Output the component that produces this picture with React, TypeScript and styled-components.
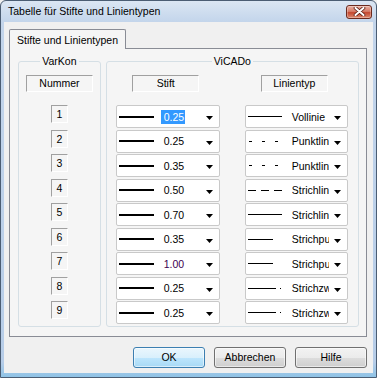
import { Fragment } from "react";
import styled, { createGlobalStyle } from "styled-components";

const GlobalStyle = createGlobalStyle`
  html, body {
    margin: 0;
    padding: 0;
    background: #f0f0f0;
  }
  body {
    font-family: "Liberation Sans", Arial, sans-serif;
    font-size: 10.5px;
    line-height: 13px;
    color: #000;
  }
`;

type Pattern = "solid" | "dot" | "dash" | "short" | "dashdot";

type Pen = {
  value: string;
  type: string;
  pattern: Pattern;
  color?: string;
};

const pens: Pen[] = [
  { value: "0.25", type: "Vollinie", pattern: "solid" },
  { value: "0.25", type: "Punktlinie", pattern: "dot" },
  { value: "0.35", type: "Punktlinie", pattern: "dot" },
  { value: "0.50", type: "Strichlinie", pattern: "dash" },
  { value: "0.70", type: "Strichlinie", pattern: "solid" },
  { value: "0.35", type: "Strichpunkt", pattern: "short" },
  { value: "1.00", type: "Strichpunkt", pattern: "short", color: "#3c0050" },
  { value: "0.25", type: "Strichzweipunkt", pattern: "dashdot" },
  { value: "0.25", type: "Strichzweipunkt", pattern: "dashdot" },
];

const Window = styled.div`
  width: 377px;
  height: 378px;
  box-sizing: border-box;
  border: 1px solid #4b5d73;
  border-radius: 6px 6px 0 0;
  background: linear-gradient(180deg, #dbe6f3 0px, #c3d5eb 21px, #b7cde8 96%, #8fc3e6 100%);
  padding: 0 3px 4px 3px;
  display: flex;
  flex-direction: column;
`;

const TitleBar = styled.div`
  height: 21px;
  display: flex;
  align-items: center;
  justify-content: space-between;
  padding: 0 1px 0 4px;
`;

const Title = styled.span`
  font-size: 10.5px;
  color: #000;
`;

const CloseButton = styled.div`
  width: 26px;
  height: 14px;
  box-sizing: border-box;
  border: 1px solid #6b2a1e;
  border-radius: 3px;
  background: linear-gradient(180deg, #eab0a2 0%, #d67c68 45%, #c4472f 55%, #dc8a70 100%);
  box-shadow: inset 0 0 0 1px rgba(255, 255, 255, 0.3);
  display: flex;
  align-items: center;
  justify-content: center;
`;

const Client = styled.div`
  flex: 1;
  background: #f0f0f0;
  padding: 7px 6px 0 5px;
  display: flex;
  flex-direction: column;
`;

const TabStrip = styled.div`
  display: flex;
  height: 20px;
  margin-bottom: -1px;
  position: relative;
  z-index: 1;
`;

const Tab = styled.div`
  width: 117px;
  box-sizing: border-box;
  border: 1px solid #898c95;
  border-bottom: none;
  border-radius: 2px 2px 0 0;
  background: #f5f5f5;
  padding: 4px 0 0 7px;
  white-space: nowrap;
`;

const Panel = styled.div`
  height: 289px;
  box-sizing: border-box;
  border: 1px solid #898c95;
  background: #f5f5f5;
  padding: 6px 7px 9px 8px;
  display: flex;
  gap: 5px;
`;

const Group = styled.fieldset<{ $width: number }>`
  margin: 0;
  min-width: 0;
  width: ${(p) => p.$width}px;
  box-sizing: border-box;
  border: 1px solid #d5dfe5;
  border-radius: 3px;
  padding: 7px 0 0 0;
  display: flex;
  flex-direction: column;
`;

const Legend = styled.legend`
  margin: 0 auto;
  padding: 0 2px;
  line-height: 13px;
`;

const Sunken = styled.div`
  box-sizing: border-box;
  border-top: 1px solid #a0a0a0;
  border-left: 1px solid #a0a0a0;
  border-right: 1px solid #ffffff;
  border-bottom: 1px solid #ffffff;
  display: flex;
  align-items: center;
  justify-content: center;
`;

const Header = styled(Sunken)`
  width: 67px;
  height: 17px;
  padding-bottom: 1px;
`;

const NumberBox = styled(Sunken)`
  width: 17px;
  height: 18px;
  padding-top: 1px;
`;

const HeaderRow = styled.div<{ $cols: string; $indent?: number }>`
  display: grid;
  grid-template-columns: ${(p) => p.$cols};
  column-gap: 25px;
  justify-items: center;
  padding-left: ${(p) => p.$indent || 0}px;
`;

const Rows = styled.div<{ $cols: string; $indent?: number }>`
  margin-top: 13px;
  display: grid;
  grid-template-columns: ${(p) => p.$cols};
  grid-auto-rows: 23px;
  column-gap: 25px;
  row-gap: 1.5px;
  justify-items: center;
  align-items: start;
  padding-left: ${(p) => p.$indent || 0}px;
`;

const Combo = styled.div`
  width: 100%;
  height: 23px;
  box-sizing: border-box;
  border: 1px solid #c9c9c9;
  border-radius: 2px;
  background: #ffffff;
  display: flex;
  align-items: center;
  padding-left: 2px;
`;

const PenSample = styled.div`
  width: 35px;
  height: 2px;
  background: #000;
  flex: none;
`;

const ComboText = styled.span`
  flex: 1;
  min-width: 0;
  overflow: hidden;
  white-space: nowrap;
  margin-left: 7px;
  padding: 0 1px 0 3px;
  display: flex;
`;

const TextValue = styled.span<{ $selected?: boolean; $color?: string }>`
  background: ${(p) => (p.$selected ? "#3399ff" : "transparent")};
  color: ${(p) => (p.$selected ? "#fff" : p.$color || "#000")};
  margin-left: -3px;
  padding: 0 1px 0 3px;
  line-height: 14px;
`;

const ArrowArea = styled.div`
  width: 18px;
  flex: none;
  display: flex;
  justify-content: center;
  padding-top: 3px;
`;

const ButtonRow = styled.div`
  display: flex;
  justify-content: flex-end;
  gap: 9px;
  margin-top: 10px;
`;

const Button = styled.div<{ $default?: boolean }>`
  width: 72px;
  height: 21px;
  box-sizing: border-box;
  border: 1px solid ${(p) => (p.$default ? "#3c7fb1" : "#707070")};
  border-radius: 3px;
  background: ${(p) =>
    p.$default
      ? "linear-gradient(180deg, #eaf6fd 0%, #d9f0fc 50%, #bee6fd 50%, #a7d9f5 100%)"
      : "linear-gradient(180deg, #f2f2f2 0%, #ebebeb 50%, #dddddd 50%, #cfcfcf 100%)"};
  box-shadow: inset 0 0 0 1px rgba(255, 255, 255, 0.55);
  display: flex;
  align-items: center;
  justify-content: center;
`;

const Arrow = () => (
  <svg width="7" height="4" viewBox="0 0 7 4">
    <polygon points="0,0 7,0 3.5,4" fill="#000" />
  </svg>
);

const LineSample = ({ pattern }: { pattern: Pattern }) => (
  <svg width="35" height="3" viewBox="0 0 35 3" style={{ flex: "none" }}>
    {pattern === "solid" && <line x1="0" y1="1.5" x2="34" y2="1.5" stroke="#000" strokeWidth="1" />}
    {pattern === "dot" && (
      <line x1="1" y1="1.5" x2="31" y2="1.5" stroke="#000" strokeWidth="1" strokeDasharray="3 10" />
    )}
    {pattern === "dash" && (
      <line x1="0" y1="1.5" x2="34" y2="1.5" stroke="#000" strokeWidth="1" strokeDasharray="8 5" />
    )}
    {pattern === "short" && <line x1="0" y1="1.5" x2="25" y2="1.5" stroke="#000" strokeWidth="1" />}
    {pattern === "dashdot" && (
      <>
        <line x1="0" y1="1.5" x2="28" y2="1.5" stroke="#000" strokeWidth="1" />
        <line x1="32" y1="1.5" x2="33" y2="1.5" stroke="#000" strokeWidth="1" />
      </>
    )}
  </svg>
);

const App = () => {
  return (
    <>
      <GlobalStyle />
      <Window>
        <TitleBar>
          <Title>Tabelle für Stifte und Linientypen</Title>
          <CloseButton>
            <svg width="13" height="9" viewBox="0 0 13 9">
              <path d="M2.5 1 L10.5 8 M10.5 1 L2.5 8" stroke="#5a1c12" strokeWidth="3.6" strokeLinecap="round" />
              <path d="M2.5 1 L10.5 8 M10.5 1 L2.5 8" stroke="#ffffff" strokeWidth="2" strokeLinecap="round" />
            </svg>
          </CloseButton>
        </TitleBar>
        <Client>
          <TabStrip>
            <Tab>Stifte und Linientypen</Tab>
          </TabStrip>
          <Panel>
            <Group $width={83}>
              <Legend>VarKon</Legend>
              <HeaderRow $cols="81px">
                <Header>Nummer</Header>
              </HeaderRow>
              <Rows $cols="81px">
                {pens.map((_, i) => (
                  <NumberBox key={i}>{i + 1}</NumberBox>
                ))}
              </Rows>
            </Group>
            <Group $width={254}>
              <Legend>ViCADo</Legend>
              <HeaderRow $cols="104px 103px" $indent={7}>
                <Header>Stift</Header>
                <Header>Linientyp</Header>
              </HeaderRow>
              <Rows $cols="104px 103px" $indent={9}>
                {pens.map((pen, i) => (
                  <Fragment key={i}>
                    <Combo>
                      <PenSample />
                      <ComboText>
                        <TextValue $selected={i === 0} $color={pen.color}>
                          {pen.value}
                        </TextValue>
                      </ComboText>
                      <ArrowArea>
                        <Arrow />
                      </ArrowArea>
                    </Combo>
                    <Combo>
                      <LineSample pattern={pen.pattern} />
                      <ComboText style={{ marginLeft: 6 }}>
                        <TextValue>{pen.type}</TextValue>
                      </ComboText>
                      <ArrowArea>
                        <Arrow />
                      </ArrowArea>
                    </Combo>
                  </Fragment>
                ))}
              </Rows>
            </Group>
          </Panel>
          <ButtonRow>
            <Button $default>OK</Button>
            <Button>Abbrechen</Button>
            <Button>Hilfe</Button>
          </ButtonRow>
        </Client>
      </Window>
    </>
  );
};

export default App;
